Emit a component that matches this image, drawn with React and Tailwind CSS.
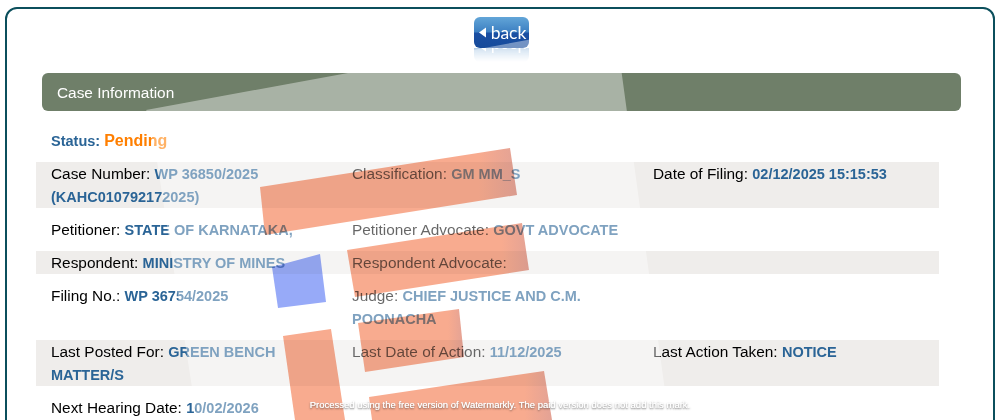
import React from 'react';

const Field = ({ label, value }) => (
  <div className="px-[15px]">
    {label && <span>{label}: </span>}
    {value && <span className="text-[14.5px] font-bold leading-none text-[#2a6496]">{value}</span>}
  </div>
);

const Row = ({ shaded, children }) => (
  <div className={`grid w-[903px] grid-cols-3 ${shaded ? 'bg-[#efedeb]' : 'py-[10px]'}`}>{children}</div>
);

const BackFace = () => (
  <div className="flex h-[31px] w-[55px] items-center justify-center gap-[4px] rounded-[6px] bg-[linear-gradient(#62a5d8_0%,#3d80c2_48%,#1a4fa3_52%,#164a9a_100%)] pl-[2px] text-white">
    <svg width="8" height="11" viewBox="0 0 8 11">
      <polygon points="7,0.5 7,10.5 0,5.5" fill="#fff" />
    </svg>
    <span className="font-['Lato',sans-serif] text-[17.5px] leading-none">back</span>
  </div>
);

const BackButton = () => (
  <div className="ml-[6px] flex w-[919px] justify-center">
    <div className="relative h-[45px] w-[55px]">
      <BackFace />
      <div className="absolute left-0 top-[31px] h-[14px] w-[55px] overflow-hidden opacity-40 [mask-image:linear-gradient(#000,transparent)]">
        <div className="-translate-y-[17px] -scale-y-100">
          <BackFace />
        </div>
      </div>
    </div>
  </div>
);

const Watermark = () => (
  <>
    <svg className="pointer-events-none absolute left-0 top-0" width="1000" height="420" viewBox="0 0 1000 420">
      <polygon points="146,110 615,24 669,420 197,420 150,116" fill="#fff" fillOpacity="0.4" />
    </svg>
    <svg className="pointer-events-none absolute left-0 top-0 mix-blend-multiply" width="1000" height="420" viewBox="0 0 1000 420">
      <defs>
        <linearGradient id="ink" x1="0" x2="1" y1="0" y2="0">
          <stop offset="0" stopColor="#f8ab8f" />
          <stop offset="0.85" stopColor="#f8ab8f" />
          <stop offset="1" stopColor="#e3a295" />
        </linearGradient>
      </defs>
      <polygon points="260,187 510,148 517,195 265,235" fill="url(#ink)" />
      <polygon points="347,250 522,223 529,270 355,297" fill="url(#ink)" />
      <polygon points="358,323 459,309 464,357 365,372" fill="url(#ink)" />
      <polygon points="369,397 544,371 552,420 372,420" fill="url(#ink)" />
      <polygon points="283,336 331,329 345,420 295,420" fill="#f8ab8f" />
      <polygon points="272,267 320,254 326,302 278,308" fill="#97aaf8" />
    </svg>
    <div className="absolute left-0 top-[398px] w-full text-center text-[9.5px] leading-[14px] text-white [text-shadow:0_0_1px_#fff,0_1px_2px_rgba(0,0,0,0.7)]">
      Processed using the free version of Watermarkly. The paid version does not add this mark.
    </div>
  </>
);

export default function App() {
  return (
    <div className="relative h-[420px] w-[1000px] overflow-hidden bg-white font-['Liberation_Sans',Arial,sans-serif] text-[15.4px] leading-[23px] text-black">
      <div className="ml-[5px] mt-[7px] h-[500px] w-[990px] rounded-[12px] border-2 border-[#0b4f5c] pl-[29px] pt-2">
        <BackButton />
        <div className="ml-[6px] mt-[11px] flex h-[38px] w-[919px] items-center rounded-[6px] bg-[#6f7f69] pl-[15px] text-white">
          Case Information
        </div>
        <div className="mt-[19px] px-[15px] text-[14.5px] font-bold text-[#2a6496]">
          Status: <span className="text-[16px] leading-none text-[#ff7f00]">Pending</span>
        </div>
        <div className="mt-[9px]">
          <Row shaded>
            <Field label="Case Number" value="WP 36850/2025 (KAHC010792172025)" />
            <Field label="Classification" value="GM MM_S" />
            <Field label="Date of Filing" value="02/12/2025 15:15:53" />
          </Row>
          <Row>
            <Field label="Petitioner" value="STATE OF KARNATAKA," />
            <Field label="Petitioner Advocate" value="GOVT ADVOCATE" />
            <Field />
          </Row>
          <Row shaded>
            <Field label="Respondent" value="MINISTRY OF MINES" />
            <Field label="Respondent Advocate" />
            <Field />
          </Row>
          <Row>
            <Field label="Filing No." value="WP 36754/2025" />
            <Field label="Judge" value="CHIEF JUSTICE AND C.M. POONACHA" />
            <Field />
          </Row>
          <Row shaded>
            <Field label="Last Posted For" value="GREEN BENCH MATTER/S" />
            <Field label="Last Date of Action" value="11/12/2025" />
            <Field label="Last Action Taken" value="NOTICE" />
          </Row>
          <Row>
            <Field label="Next Hearing Date" value="10/02/2026" />
            <Field />
            <Field />
          </Row>
        </div>
      </div>
      <Watermark />
    </div>
  );
}
